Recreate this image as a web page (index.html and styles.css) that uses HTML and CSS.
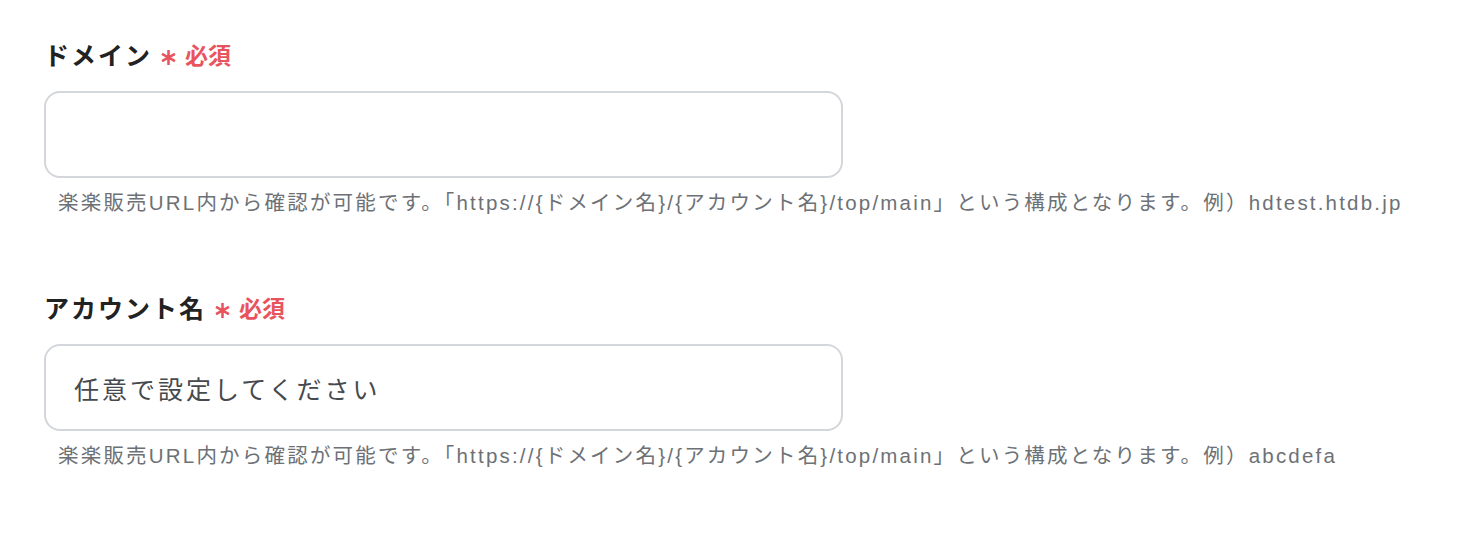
FILE: index.html
```html
<!DOCTYPE html>
<html lang="ja">
<head>
<meta charset="utf-8">
<link rel="stylesheet" href="styles.css">
</head>
<body>
<form class="form">
  <div class="field">
    <label class="label">ドメイン<span class="req"><svg class="ast" viewBox="0 0 16 16" width="17" height="17" aria-hidden="true"><path d="M8 1V15M1.9 4.5L14.1 11.5M1.9 11.5L14.1 4.5" stroke="currentColor" stroke-width="2.4" fill="none"/></svg>必須</span></label>
    <input class="input" type="text">
    <p class="help">楽楽販売URL内から確認が可能です。「https://{ドメイン名}/{アカウント名}/top/main」という構成となります。例）hdtest.htdb.jp</p>
  </div>
  <div class="field">
    <label class="label">アカウント名<span class="req"><svg class="ast" viewBox="0 0 16 16" width="17" height="17" aria-hidden="true"><path d="M8 1V15M1.9 4.5L14.1 11.5M1.9 11.5L14.1 4.5" stroke="currentColor" stroke-width="2.4" fill="none"/></svg>必須</span></label>
    <input class="input" type="text" placeholder="任意で設定してください">
    <p class="help">楽楽販売URL内から確認が可能です。「https://{ドメイン名}/{アカウント名}/top/main」という構成となります。例）abcdefa</p>
  </div>
</form>
</body>
</html>
```
FILE: styles.css
```css
* { box-sizing: border-box; }
html, body { margin: 0; background: #fff; }
body {
  font-family: "Noto Sans CJK JP", "Noto Sans", sans-serif;
  color: #222;
}
.form {
  padding: 38px 0 0 44px;
  display: flex;
  flex-direction: column;
  gap: 75px;
}
.field {
  display: flex;
  flex-direction: column;
  align-items: flex-start;
}
.label {
  display: flex;
  align-items: center;
  font-size: 25px;
  line-height: 32px;
  font-weight: 700;
  letter-spacing: 0.08em;
  color: #222;
  margin-bottom: 21px;
}
.req {
  display: inline-flex;
  align-items: center;
  color: #e8545e;
  font-size: 23px;
  letter-spacing: 0;
  font-weight: 700;
  margin-left: 8px;
}
.ast {
  margin-right: 8px;
  position: relative;
  top: 3px;
}
.input {
  width: 799px;
  height: 87px;
  border: 2px solid #d3d6da;
  border-radius: 16px;
  padding: 0 28px;
  font-family: "Noto Sans CJK JP", sans-serif;
  font-size: 25px;
  letter-spacing: 0.12em;
  color: #444;
  background: #fff;
  outline: none;
}
.input::placeholder { color: #46494d; opacity: 1; }
.help {
  margin: 12px 0 0;
  padding-left: 14px;
  font-family: "Liberation Sans", "Noto Sans CJK JP", sans-serif;
  font-size: 20.5px;
  line-height: 26px;
  letter-spacing: 2.2px;
  color: #6d7176;
}
```
